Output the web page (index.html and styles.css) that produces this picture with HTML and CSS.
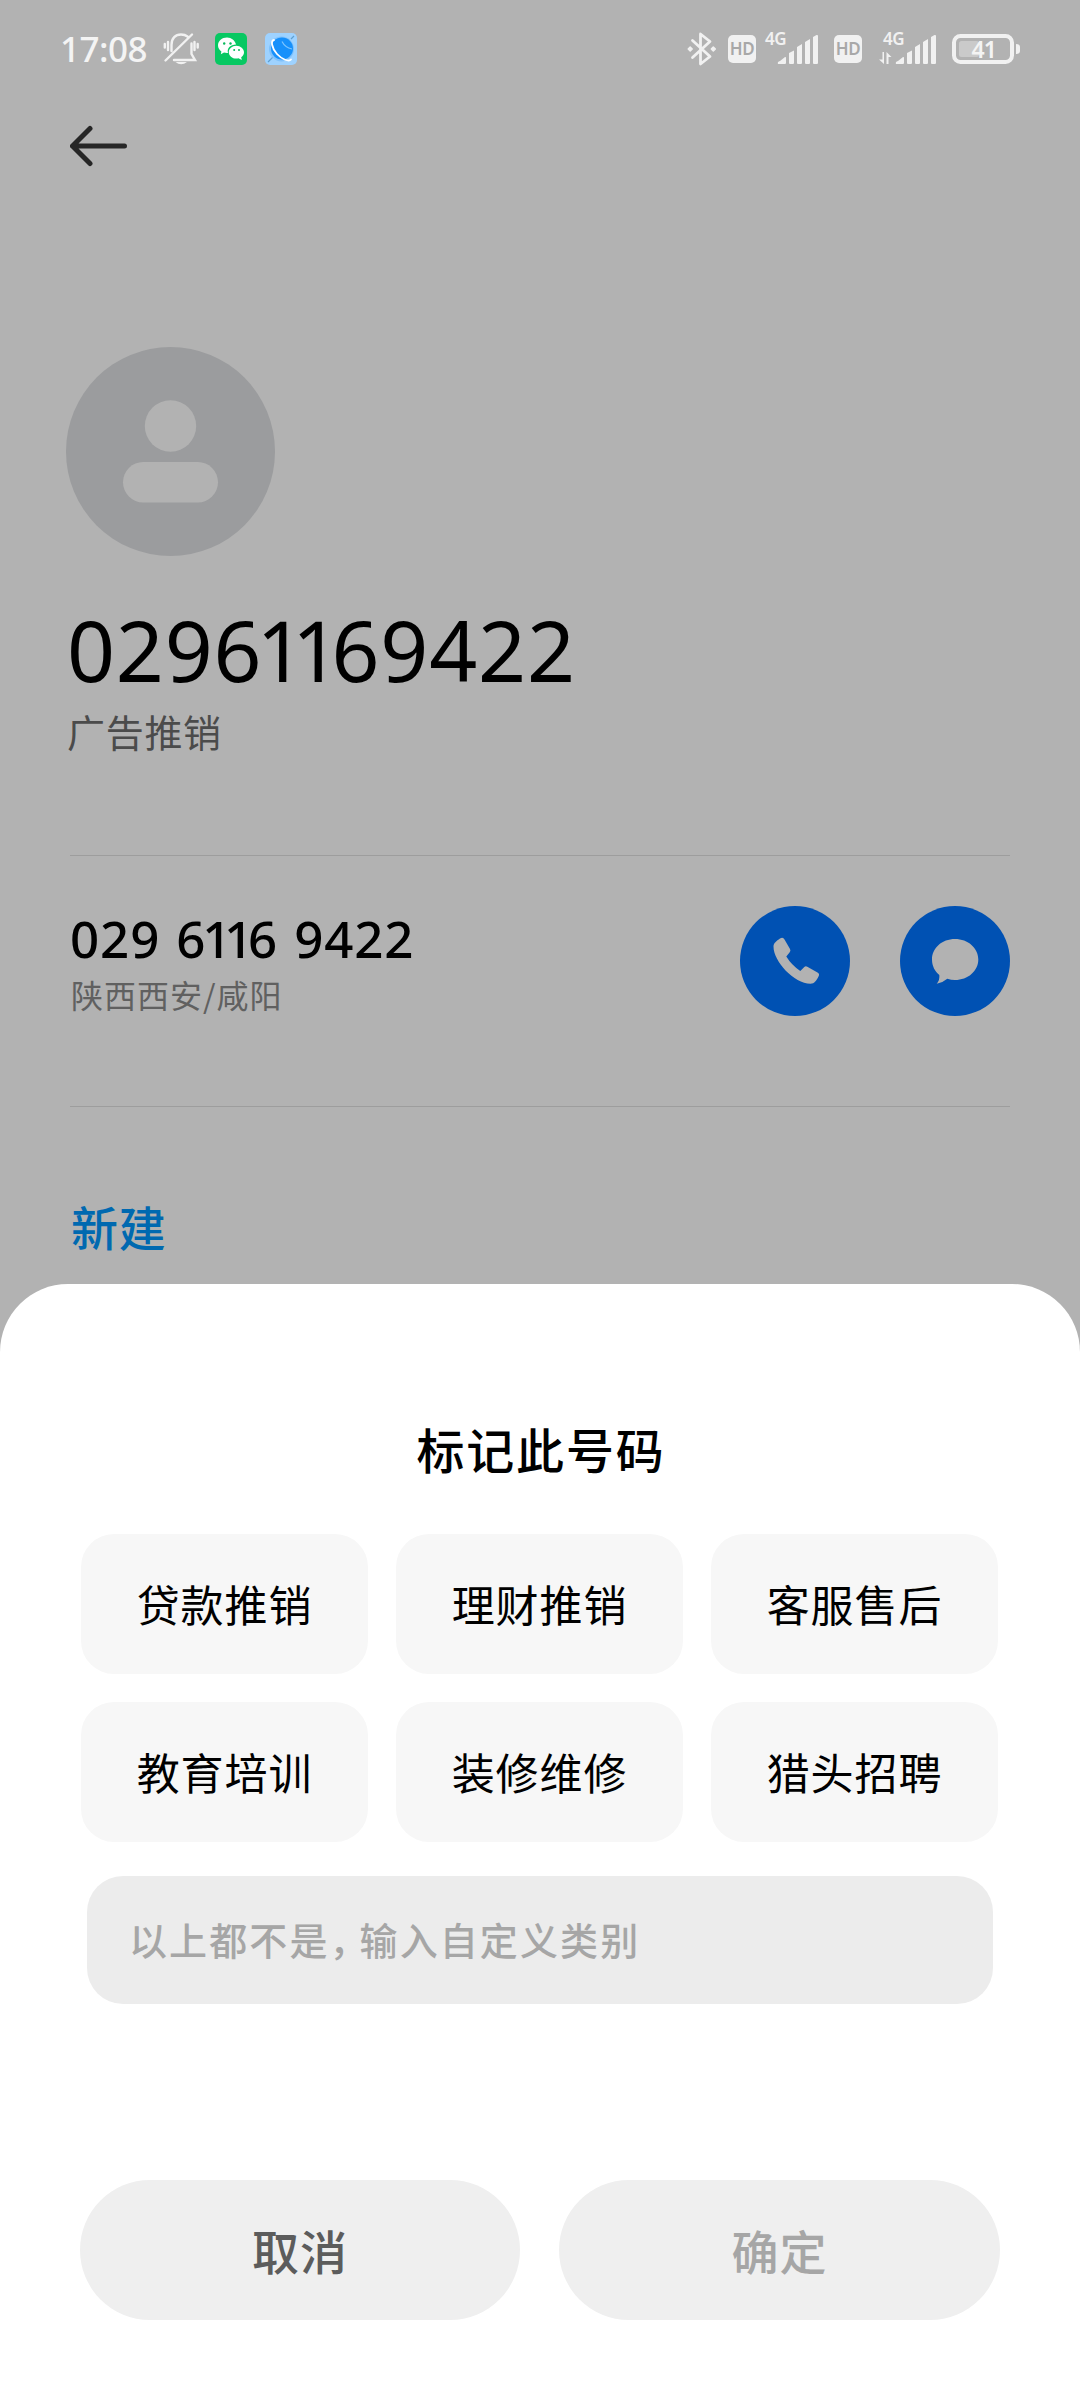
FILE: index.html
```html
<!DOCTYPE html>
<html lang="zh-CN">
<head>
<meta charset="utf-8">
<title>标记此号码</title>
<link rel="stylesheet" href="styles.css">
</head>
<body>
<div class="screen">
  <header class="status">
    <span class="clock">17:08</span>
    <svg class="bell" width="36" height="34" viewBox="0 0 36 34" fill="none" stroke="#f1f1f1" stroke-width="2.4" stroke-linecap="round">
      <path d="M8.500 19V13C8.500 6 12.500 2.500 18 2.500Q22 2.500 24.500 4.500M11 28H32L28.500 22V11.500M2.500 28.500L29 2.500M5 10V18M1.800 12V15.500M31.500 10V18M34.700 12V15.500"/>
      <path d="M12.500 30H24Q18 34.500 12.500 30Z" fill="#f1f1f1" stroke="none"/>
    </svg>
    <svg class="wechat" width="32" height="32" viewBox="0 0 32 32">
      <rect width="32" height="32" rx="5" fill="#07c862"/>
      <path d="M12 4.500C7 4.500 3 8 3 12.300C3 15 4.400 17 6.400 18.400L5.800 21.200L9 19.600Q11 20.200 13 20C11.500 15.500 15.500 11.500 21 11.500C20 7.500 16.500 4.500 12 4.500Z" fill="#fff"/>
      <path d="M21.300 12.700C17 12.700 13.800 15.700 13.800 19.200C13.800 23.500 18.500 26.500 23.500 25.300L26.800 27L26.200 24.200C28 23 29 21.200 29 19.200C29 15.700 25.500 12.700 21.300 12.700Z" fill="#fff"/>
      <g fill="#07b95b"><circle cx="9.200" cy="10.500" r="1.200"/><circle cx="15.500" cy="10.500" r="1.200"/><circle cx="19.200" cy="17" r="1"/><circle cx="24" cy="17" r="1"/></g>
    </svg>
    <svg width="32" height="32" viewBox="0 0 32 32">
      <rect width="32" height="32" rx="5" fill="#9ed2ff"/>
      <path d="M3 29L8 24M26 6L29 3" stroke="#5f9fd0" stroke-width="1.200"/>
      <circle cx="16.500" cy="16" r="12.500" fill="#7fc1fb"/>
      <circle cx="17" cy="15.500" r="11" fill="#1690fb"/>
      <path d="M17 8.500Q20 14.500 27 16" fill="none" stroke="#7cc4ff" stroke-width="1.200"/>
      <path d="M9 7C5.500 7 6.500 15 12 21C17 26.500 24 29 26 26.500" fill="none" stroke="#fff" stroke-width="1.800" stroke-linecap="round"/>
    </svg>
    <svg class="bluetooth" width="30" height="34" viewBox="0 0 30 34" fill="none" stroke="#f1f1f1" stroke-width="2.800" stroke-linejoin="round" stroke-linecap="round">
      <path d="M5.500 8.500L23 24.500L13.500 32V2L23 9.500L5.500 25.500"/>
      <path d="M3.200 15L5.200 17L3.200 19L1.200 17ZM26.300 15L28.300 17L26.300 19L24.300 17Z" fill="#f1f1f1" stroke-width="1.500"/>
    </svg>
    <span class="hd">HD</span>
    <svg class="signal" width="53" height="32" viewBox="0 0 53 32" fill="#f1f1f1">
      <text x="0" y="12" class="net">4G</text>
      <path d="M13 31Q12 29 15 28L20 24Q21 23.500 21 25V30Q21 31 20 31ZM24 20L29 17.500V30Q29 31 28 31H25Q24 31 24 30ZM32 14L37 11V30Q37 31 36 31H33Q32 31 32 30ZM40 9L45 6V30Q45 31 44 31H41Q40 31 40 30ZM48 4L51.500 2Q53 1.500 53 3V30Q53 31 52 31H49Q48 31 48 30Z"/>
    </svg>
    <span class="hd hd-second">HD</span>
    <svg class="signal" width="57" height="32" viewBox="-4 0 57 32" fill="#f1f1f1">
      <text x="0" y="12" class="net">4G</text>
      <path d="M-.500 19H1V31L-4 26.500H-.500ZM3.500 19L8.500 24H5.500V31H3.500Z"/>
      <path d="M13 31Q12 29 15 28L20 24Q21 23.500 21 25V30Q21 31 20 31ZM24 20L29 17.500V30Q29 31 28 31H25Q24 31 24 30ZM32 14L37 11V30Q37 31 36 31H33Q32 31 32 30ZM40 9L45 6V30Q45 31 44 31H41Q40 31 40 30ZM48 4L51.500 2Q53 1.500 53 3V30Q53 31 52 31H49Q48 31 48 30Z"/>
    </svg>
    <svg class="battery" width="68" height="30" viewBox="0 0 68 30">
      <rect x="2" y="2" width="58" height="26" rx="6.500" fill="none" stroke="#f1f1f1" stroke-width="4"/>
      <rect x="7" y="7" width="20" height="16" rx="2.500" fill="#cacaca"/>
      <path d="M64 10Q68 10 68 13V17Q68 20 64 20Z" fill="#f1f1f1"/>
      <text x="19.500" y="23.500" class="level">41</text>
    </svg>
  </header>

  <nav class="toolbar">
    <svg width="60" height="42" viewBox="0 0 60 42" fill="none" stroke="#262626" stroke-width="5" stroke-linecap="round" stroke-linejoin="round">
      <path d="M20 3.500L2.500 21L20 38.500M2.500 21H54.500"/>
    </svg>
  </nav>

  <main class="contact">
    <svg class="avatar" width="209" height="209" viewBox="0 0 209 209">
      <circle cx="104.500" cy="104.500" r="104.500" fill="#9b9c9e"/>
      <g fill="#b2b2b2"><circle cx="104.500" cy="79" r="25.700"/><rect x="57" y="115" width="95" height="40.500" rx="20.200"/></g>
    </svg>
    <h1 class="name">0296<span class="ones">11</span>69422</h1>
    <p class="tag">广告推销</p>
    <section class="phone-row">
      <div class="phone-text">
        <p class="phone">029 6<span class="ones">11</span>6 9422</p>
        <p class="region">陕西西安/咸阳</p>
      </div>
      <svg class="action" width="110" height="110" viewBox="0 0 110 110">
        <circle cx="55" cy="55" r="55" fill="#0051b3"/>
        <path d="M40 32.500Q43 30.500 44.500 33.500L50 43Q51 45 49.700 46.300L46.300 50.500Q51.500 59 60.300 65L64.300 61Q65.700 59.700 67.300 60.700L77.500 66.500Q80 68 78.500 70.500C76.500 74.500 74.500 77.700 70.500 77.700C54 77.500 33.500 55.500 33.500 40.500C33.500 37 36.500 35 40 32.500Z" fill="#b2b2b2"/>
      </svg>
      <svg class="action" width="110" height="110" viewBox="0 0 110 110">
        <circle cx="55" cy="55" r="55" fill="#0051b3"/>
        <path d="M55 33C68 33 78.300 42 78.300 53.500C78.300 65 68 74 55 74Q51 74 47.300 72.700Q43 76.500 36.700 77.700Q40 74 39.300 69C35 65.500 32 60 32 53.500C32 42 42 33 55 33Z" fill="#b2b2b2"/>
      </svg>
    </section>
    <a class="create">新建</a>
  </main>

  <section class="sheet">
    <h2 class="title">标记此号码</h2>
    <div class="chips">
      <button class="chip">贷款推销</button>
      <button class="chip">理财推销</button>
      <button class="chip">客服售后</button>
      <button class="chip">教育培训</button>
      <button class="chip">装修维修</button>
      <button class="chip">猎头招聘</button>
    </div>
    <div class="custom">以上都不是<span class="comma">，</span>输入自定义类别</div>
    <div class="buttons">
      <button class="button">取消</button>
      <button class="button button-disabled">确定</button>
    </div>
  </section>
</div>
</body>
</html>
```
FILE: styles.css
```css
* { box-sizing: border-box; }

body {
  margin: 0;
  font-family: "Noto Sans CJK SC", sans-serif;
}

h1, h2, p { margin: 0; font-weight: 400; }
svg { display: block; flex: none; }
button { border: 0; padding: 0; font: inherit; }

.screen {
  width: 1080px;
  height: 2400px;
  display: flex;
  flex-direction: column;
  background: #b2b2b2;
  overflow: hidden;
}

/* Status bar */
.status {
  height: 98px;
  padding: 0 60px 0 60px;
  display: flex;
  align-items: center;
  font-family: "Noto Sans", sans-serif;
}
.clock {
  width: 103px;
  font-size: 35px;
  line-height: 48px;
  font-weight: 550;
  letter-spacing: -0.5px;
  color: #f4f4f4;
}
.wechat { margin: 0 18px 0 16px; }
.bluetooth { margin-left: auto; }
.signal { overflow: visible; }
.hd {
  width: 28px;
  height: 28px;
  margin: 0 9px 0 11px;
  border-radius: 5px;
  background: #f1f1f1;
  color: #a8a8a8;
  font-size: 17px;
  line-height: 28px;
  font-weight: 600;
  letter-spacing: -0.5px;
  text-align: center;
}
.hd-second { margin: 0 17px 0 16px; }
.net { font-size: 17px; font-weight: 600; letter-spacing: -0.5px; }
.level { font-size: 23px; font-weight: 600; letter-spacing: -1px; fill: #f4f4f4; }
.battery { margin-left: 16px; }

.toolbar { height: 97px; padding: 27px 70px 0; }

/* Contact details */
.contact {
  height: 1089px;
  padding: 152px 70px 0;
  display: flex;
  flex-direction: column;
}
.avatar { margin-left: -4px; }
.name {
  margin-top: 49px;
  margin-left: -3px;
  font: 400 84px/90px "Noto Sans", sans-serif;
  letter-spacing: 0.8px;
}
.name .ones { letter-spacing: -12.5px; margin: 0 4px 0 -6px; }
.tag {
  margin: 8px 0 0 -3px;
  font-size: 38px;
  line-height: 56px;
  letter-spacing: 0.7px;
  color: #4b4b4b;
}
.phone-row {
  height: 252px;
  margin-top: 96px;
  border: solid #9d9d9d;
  border-width: 1px 0;
  display: flex;
  gap: 50px;
  padding-top: 50px;
}
.phone-text { flex: 1; margin-top: -1px; }
.phone {
  font: 550 51px/66px "Noto Sans", sans-serif;
  letter-spacing: 0.9px;
  word-spacing: 1.8px;
  white-space: nowrap;
}
.phone .ones { letter-spacing: -7.5px; margin: 0 2.5px 0 -4px; }
.region {
  margin-left: 1px;
  font-size: 32px;
  line-height: 46px;
  letter-spacing: 1px;
  color: #606060;
}
.create {
  margin: 85px 0 0 1px;
  font-size: 47px;
  line-height: 68px;
  font-weight: 500;
  letter-spacing: 0.8px;
  color: #0069b0;
}

/* Bottom sheet */
.sheet {
  flex: 1;
  padding: 129px 80px 80px;
  display: flex;
  flex-direction: column;
  background: #fff;
  border-radius: 68px 68px 0 0;
}
.title {
  padding-left: 2px;
  font-size: 48px;
  line-height: 70px;
  font-weight: 500;
  letter-spacing: 1.8px;
  text-align: center;
}
.chips {
  margin: 51px 1px 0;
  display: grid;
  grid-template-columns: repeat(3, 287px);
  gap: 28px;
}
.chip {
  height: 140px;
  padding-bottom: 3px;
  border-radius: 33px;
  background: #f7f7f7;
  color: #000;
  font-size: 43px;
  letter-spacing: 0.9px;
}
.custom {
  height: 128px;
  margin: 34px 7px 0;
  padding-left: 42px;
  border-radius: 36px;
  background: #ececec;
  color: #a6a6a6;
  font-size: 38px;
  line-height: 126px;
  font-weight: 500;
  letter-spacing: 2.1px;
}
.comma { letter-spacing: -8px; }
.buttons {
  margin-top: auto;
  display: grid;
  grid-template-columns: 440px 441px;
  gap: 39px;
}
.button {
  height: 140px;
  padding-bottom: 2px;
  border-radius: 70px;
  background: #efefef;
  color: #5c5c5c;
  font-size: 47px;
  font-weight: 500;
  letter-spacing: 1px;
}
.button-disabled { color: #a6a6a6; }
```
